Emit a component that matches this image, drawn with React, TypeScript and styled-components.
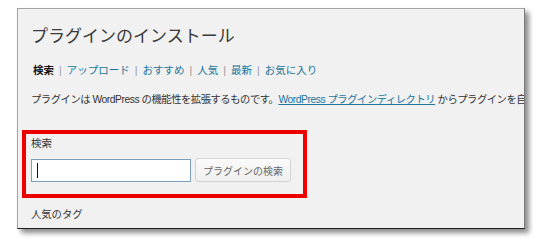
import React from 'react';
import styled, { createGlobalStyle } from 'styled-components';

const colors = {
  panel: '#f1f1f1',
  text: '#333333',
  title: '#3a3a3a',
  link: '#21759b',
  sep: '#999999',
  red: '#ee0000',
};

const fontStack = '"Liberation Sans", "Noto Sans CJK JP", sans-serif';

const GlobalStyle = createGlobalStyle`
  html, body {
    margin: 0;
    padding: 0;
    background: #ffffff;
  }
  body {
    font-family: ${fontStack};
    color: ${colors.text};
  }
`;

const Page = styled.div`
  width: 551px;
  height: 246px;
  padding: 8px 0 0 17px;
  box-sizing: border-box;
`;

const Panel = styled.div`
  width: 508px;
  height: 221px;
  box-sizing: border-box;
  background: ${colors.panel};
  border-style: solid;
  border-width: 1px;
  border-color: #a3a3a3 #7a7a7a #1e1e1e #a3a3a3;
  box-shadow: 4px 4px 5px rgba(0, 0, 0, 0.45);
  overflow: hidden;
  padding: 15px 0 0 13px;
  display: flex;
  flex-direction: column;
`;

const Title = styled.h2`
  margin: 0;
  font-size: 17px;
  font-weight: normal;
  line-height: 26px;
  color: ${colors.title};
`;

const SubNav = styled.ul`
  display: flex;
  list-style: none;
  margin: 12px 0 0 2px;
  padding: 0;
  font-size: 10.5px;
  line-height: 16px;
`;

const NavItem = styled.li<{ $current?: boolean }>`
  color: ${props => (props.$current ? '#111111' : colors.link)};
  font-weight: ${props => (props.$current ? 'bold' : 'normal')};
  white-space: nowrap;
`;

const Sep = styled.span`
  color: ${colors.sep};
  font-weight: normal;
  margin: 0 5px;
`;

const Description = styled.p`
  margin: 14px 0 0 0;
  width: 493px;
  overflow: hidden;
  font-size: 10.3px;
  letter-spacing: -0.45px;
  line-height: 16px;
  white-space: nowrap;
  color: ${colors.text};
`;

const DirLink = styled.a`
  color: ${colors.link};
  text-decoration: underline;
`;

const SearchBox = styled.div`
  margin: 22px 0 0 -9px;
  width: 285px;
  height: 68px;
  box-sizing: border-box;
  border: 4px solid ${colors.red};
  padding: 1px 0 0 5px;
  display: flex;
  flex-direction: column;
`;

const Label = styled.div`
  font-size: 10.5px;
  line-height: 16px;
  color: ${colors.text};
`;

const SearchRow = styled.div`
  display: flex;
  align-items: center;
  gap: 4px;
  margin-top: 7px;
`;

const SearchField = styled.div`
  width: 160px;
  height: 23px;
  box-sizing: border-box;
  background: #ffffff;
  border: 1px solid #7c9fbd;
  display: flex;
  align-items: center;
  padding-left: 5px;
`;

const Caret = styled.span`
  width: 1px;
  height: 15px;
  background: #111111;
`;

const SearchButton = styled.button`
  width: 96px;
  height: 24px;
  box-sizing: border-box;
  border: 1px solid #d4d4d4;
  border-radius: 3px;
  background: linear-gradient(#fafafa, #efefef);
  color: #666666;
  font-family: ${fontStack};
  font-size: 10px;
  padding: 0;
`;

const Tags = styled.h4`
  margin: 9px 0 0 0;
  font-size: 10.3px;
  font-weight: normal;
  line-height: 16px;
  color: ${colors.text};
`;

const navItems = ['検索', 'アップロード', 'おすすめ', '人気', '最新', 'お気に入り'];

const App: React.FC = () => {
  return (
    <>
      <GlobalStyle />
      <Page>
        <Panel>
          <Title>プラグインのインストール</Title>
          <SubNav>
            {navItems.map((item, i) => (
              <NavItem key={item} $current={i === 0}>
                {i > 0 && <Sep>|</Sep>}
                {item}
              </NavItem>
            ))}
          </SubNav>
          <Description>
            プラグインは WordPress の機能性を拡張するものです。<DirLink href="#">WordPress プラグインディレクトリ</DirLink> からプラグインを自動的にインストールできます。
          </Description>
          <SearchBox>
            <Label>検索</Label>
            <SearchRow>
              <SearchField>
                <Caret />
              </SearchField>
              <SearchButton>プラグインの検索</SearchButton>
            </SearchRow>
          </SearchBox>
          <Tags>人気のタグ</Tags>
        </Panel>
      </Page>
    </>
  );
};

export default App;
